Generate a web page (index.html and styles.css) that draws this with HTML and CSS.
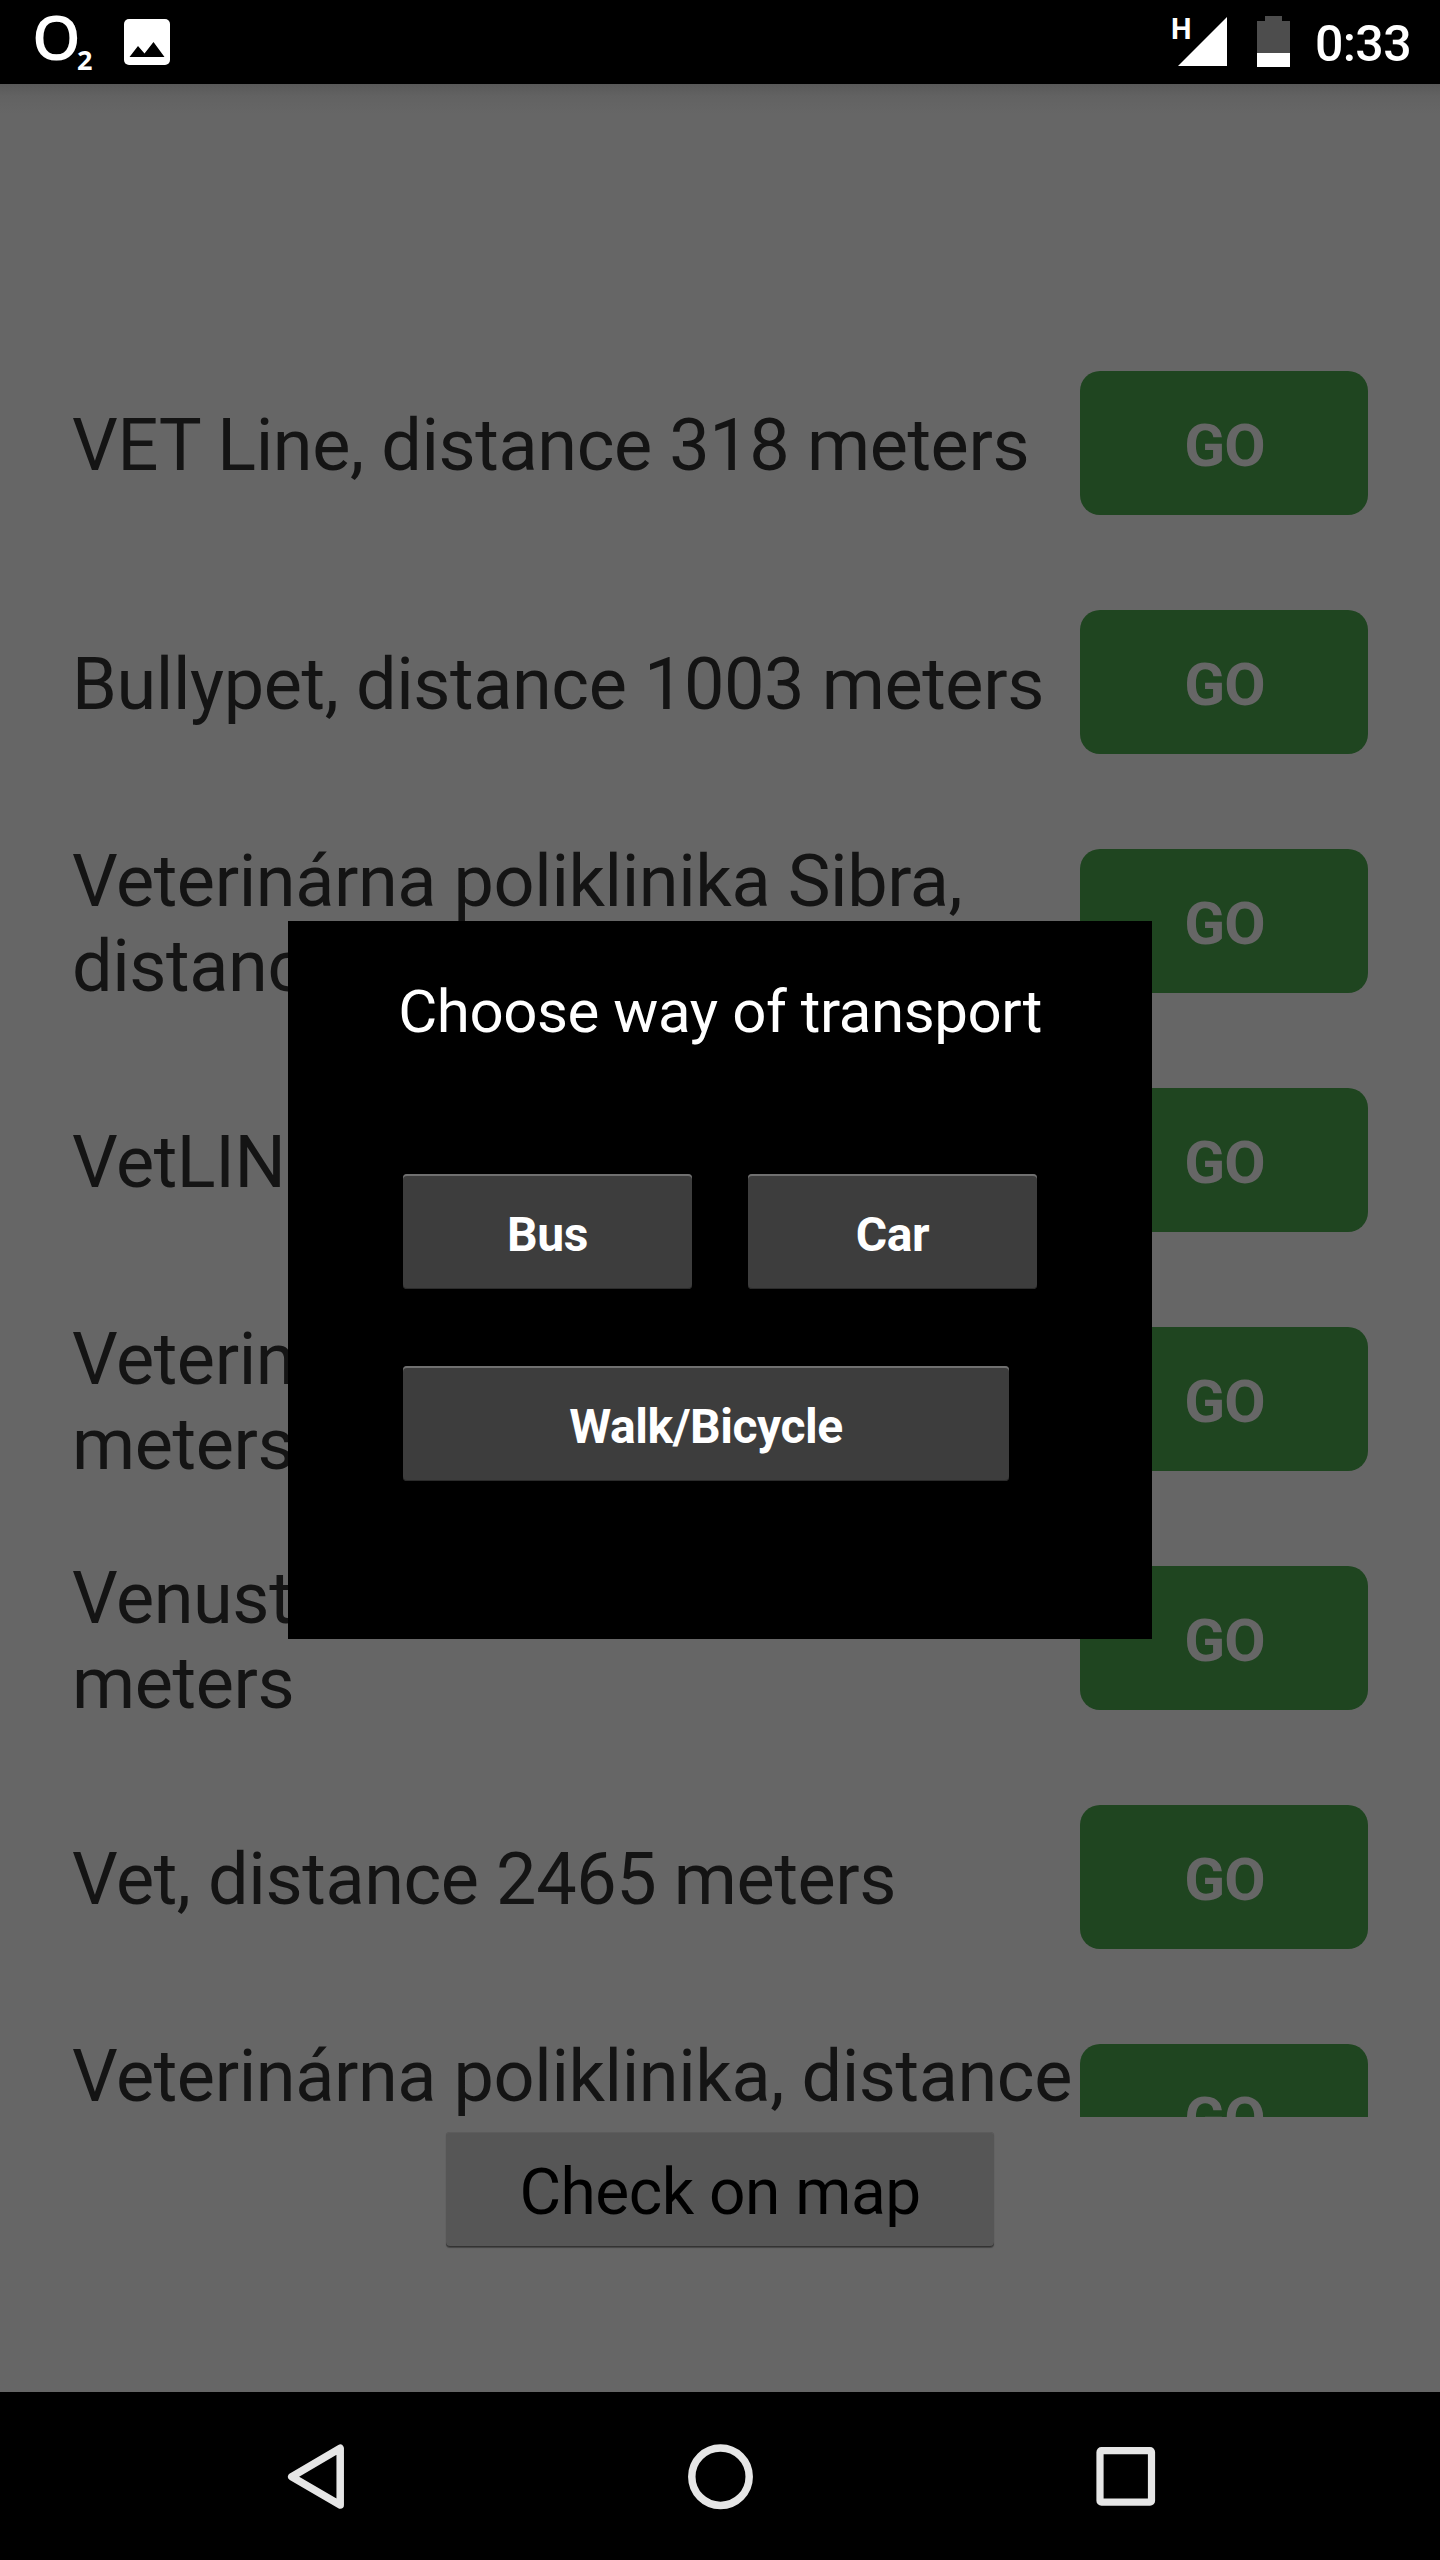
FILE: index.html
```html
<!DOCTYPE html>
<html lang="en">
<head>
<meta charset="utf-8">
<title>Vets nearby</title>
<link rel="stylesheet" href="styles.css">
</head>
<body>
<div class="screen">
  <header class="status">
    <div class="status-left">
      <svg class="carrier" width="64" height="84" viewBox="0 0 64 84">
        <text class="carrier-o" x="3" y="59.500">O</text>
        <text class="carrier-2" x="48" y="69.500">2</text>
      </svg>
      <svg width="46" height="46" viewBox="0 0 46 46">
        <rect width="46" height="46" rx="5" fill="#fff"/>
        <path d="M5.500 38 L14 27 L20.500 34.500 L29.500 23 L40.500 38 Z" fill="#000"/>
      </svg>
    </div>
    <div class="status-right">
      <svg width="56" height="84" viewBox="0 0 56 84">
        <text class="network" x="0" y="39">H</text>
        <path d="M7 66 L56 17 V66 Z" fill="#fff"/>
      </svg>
      <svg class="battery" width="33" height="84" viewBox="0 0 33 84">
        <path d="M8 16 H25 V21 H33 V53 H0 V21 H8 Z" fill="#4d4d4d"/>
        <rect y="53" width="33" height="14" fill="#fff"/>
      </svg>
      <span class="clock">0:33</span>
    </div>
  </header>

  <main class="content">
    <ul class="list">
      <li class="row"><span class="name">VET Line, distance 318 meters</span><button class="go">GO</button></li>
      <li class="row"><span class="name">Bullypet, distance 1003 meters</span><button class="go">GO</button></li>
      <li class="row"><span class="name">Veterinárna poliklinika Sibra,<br>distance 1184 meters</span><button class="go">GO</button></li>
      <li class="row"><span class="name">VetLINE, distance 1338 meters</span><button class="go">GO</button></li>
      <li class="row"><span class="name">Veterinárna klinika, distance<br>meters</span><button class="go">GO</button></li>
      <li class="row"><span class="name">Venustas Vet, distance 2012<br>meters</span><button class="go">GO</button></li>
      <li class="row"><span class="name">Vet, distance 2465 meters</span><button class="go">GO</button></li>
      <li class="row"><span class="name">Veterinárna poliklinika, distance<br>2570 meters</span><button class="go">GO</button></li>
    </ul>
    <button class="map">Check on map</button>
  </main>

  <nav class="nav">
    <svg width="65" height="66" viewBox="0 0 65 66"><path d="M57.200 4.300 V61 L8.700 32.700 Z" fill="none" stroke="#e6e6e6" stroke-width="7.500" stroke-linejoin="round"/></svg>
    <svg width="66" height="66" viewBox="0 0 66 66"><circle cx="33.500" cy="32.700" r="28.700" fill="none" stroke="#e6e6e6" stroke-width="7.500"/></svg>
    <svg width="65" height="66" viewBox="0 0 65 66"><rect x="8" y="6.700" width="51.500" height="51.500" rx="1.500" fill="none" stroke="#e6e6e6" stroke-width="7.200"/></svg>
  </nav>

  <section class="dialog">
    <h1 class="dialog-title">Choose way of transport</h1>
    <div class="choices">
      <button class="choice">Bus</button>
      <button class="choice">Car</button>
      <button class="choice choice-wide">Walk/Bicycle</button>
    </div>
  </section>
</div>
</body>
</html>
```
FILE: styles.css
```css
* { box-sizing: border-box; }

body {
  margin: 0;
  background: #000;
  font-family: Roboto, "Liberation Sans", sans-serif;
}

button {
  border: 0;
  font-family: inherit;
}

.screen {
  position: relative;
  display: flex;
  flex-direction: column;
  width: 1440px;
  height: 2560px;
  overflow: hidden;
}

.status {
  display: flex;
  justify-content: space-between;
  height: 84px;
  padding: 0 29px 0 29px;
  background: #000;
  color: #fff;
}

.status-left,
.status-right {
  display: flex;
  align-items: center;
}

.status-left { gap: 31px; }

.carrier-o {
  fill: #fff;
  font: 600 62px "Open Sans", sans-serif;
}

.carrier-2 {
  fill: #fff;
  font: 700 27px "Open Sans", sans-serif;
}

.network {
  fill: #fff;
  font: 700 29px Roboto, sans-serif;
  letter-spacing: -1px;
}

.battery { margin-left: 30px; }

.clock {
  margin-left: 25px;
  padding-top: 4px;
  font-size: 50px;
  font-weight: 500;
  letter-spacing: -0.6px;
}

.content {
  display: flex;
  flex-direction: column;
  align-items: center;
  height: 2308px;
  background: linear-gradient(#595959, #626262 12px, #666 30px);
}

.list {
  display: flex;
  flex-direction: column;
  gap: 95px;
  width: 100%;
  height: 2033px;
  margin: 0;
  padding: 287px 72px 0;
  overflow: hidden;
  list-style: none;
}

.row {
  display: flex;
  flex: none;
  align-items: center;
  height: 144px;
}

.name {
  width: 1008px;
  padding-top: 5px;
  color: #141414;
  font-size: 72px;
  letter-spacing: -0.39px;
  line-height: 85px;
  white-space: nowrap;
}

.go {
  width: 288px;
  height: 144px;
  padding: 5px 0 0 1px;
  border-radius: 20px;
  background: #1f4520;
  color: #666;
  font-size: 60px;
  font-weight: 700;
  letter-spacing: -0.8px;
}

.map {
  width: 548px;
  height: 115px;
  margin-top: 15px;
  padding: 6px 0 0;
  border-radius: 4px;
  background: #565656;
  box-shadow: inset 0 1px #5c5c5c, inset 0 -1px #333, 0 1px 1px #444;
  color: #000;
  font-size: 64px;
  letter-spacing: -0.5px;
}

.nav {
  display: flex;
  justify-content: center;
  gap: 339px;
  height: 168px;
  padding-top: 52px;
  background: #000;
}

.dialog {
  position: absolute;
  top: 921px;
  left: 288px;
  width: 864px;
  height: 718px;
  padding-top: 56px;
  background: #000;
}

.dialog-title {
  margin: 0;
  color: #fff;
  font-size: 60px;
  font-weight: 400;
  letter-spacing: -0.43px;
  line-height: 70px;
  text-align: center;
  white-space: nowrap;
}

.choices {
  display: grid;
  grid-template-columns: 289px 289px;
  gap: 77px 56px;
  margin-top: 127px;
  padding-left: 115px;
}

.choice {
  height: 115px;
  padding: 6px 0 0;
  border-radius: 4px;
  background: #3d3d3d;
  box-shadow: inset 0 2px #707070, inset 0 -1px #2b2b2b;
  color: #fff;
  font-size: 48px;
  font-weight: 700;
  letter-spacing: -0.45px;
}

.choice-wide {
  grid-column: 1 / -1;
  width: 606px;
}
```
